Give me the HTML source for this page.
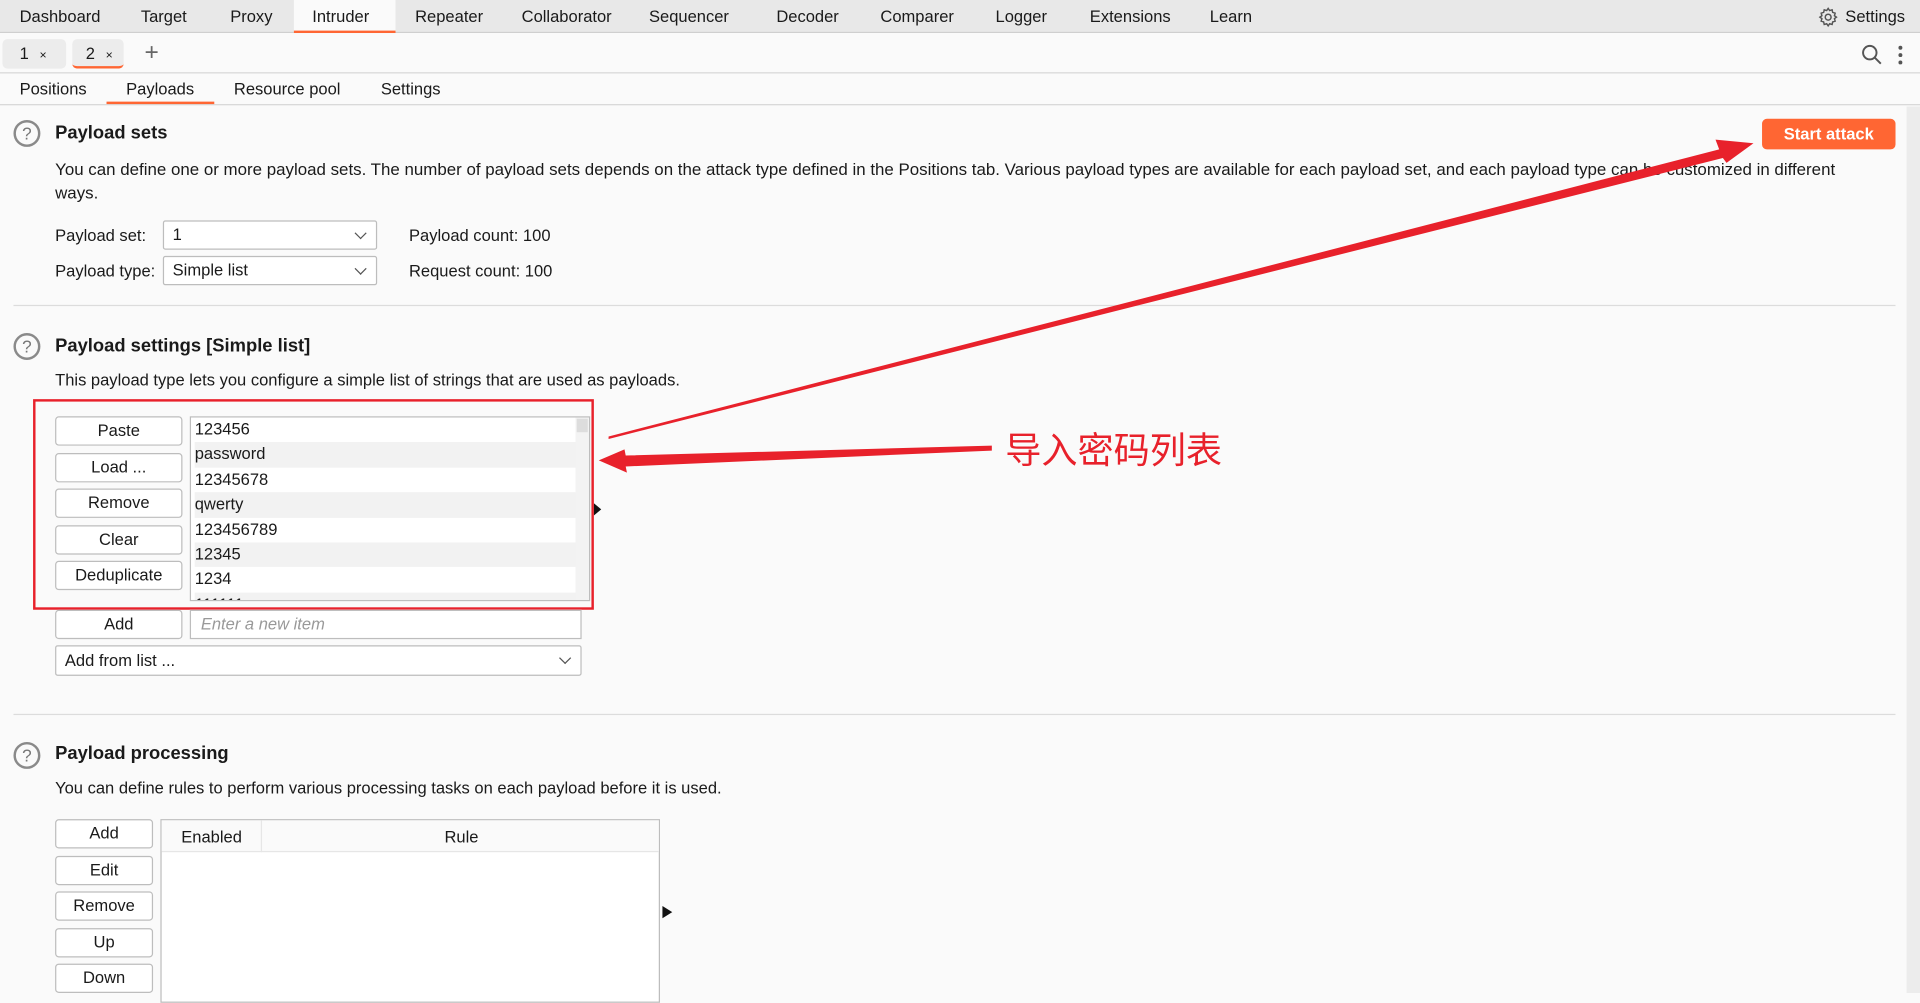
<!DOCTYPE html>
<html><head><meta charset="utf-8"><style>
*{box-sizing:border-box;margin:0;padding:0}
body{width:1920px;height:993px;overflow:hidden;background:#fafafa;font-family:"Liberation Sans","Noto Sans CJK SC",sans-serif;}
#w{position:absolute;left:0;top:0;width:1568px;height:811px;transform:scale(1.22449,1.2244);transform-origin:0 0;font-size:13.5px;color:#1a1a1a;background:#fafafa}
.a{position:absolute;white-space:nowrap}
.btn{position:absolute;background:#fff;border:1px solid #bdbdbd;border-radius:3px;text-align:center;font-size:13.5px}
.sel{position:absolute;background:#fff;border:1px solid #bdbdbd;border-radius:2px;padding-left:7px}
.sel:after{content:"";position:absolute;right:9px;top:6px;width:6px;height:6px;border-right:1.2px solid #555;border-bottom:1.2px solid #555;transform:rotate(45deg)}
.q{position:absolute;width:22px;height:22px;border:2px solid #8a8a8a;border-radius:50%;color:#777;font-size:14px;text-align:center;line-height:18px}
h2{position:absolute;font-size:15px;font-weight:bold;white-space:nowrap}
.hr{position:absolute;left:11px;width:1537px;height:1px;background:#dcdcdc}
</style></head><body><div id="w">
<div class="a" style="left:0;top:0;width:1568px;height:27px;background:#e8e8e8;border-bottom:1px solid #cfcfcf"></div>
<div class="a" style="left:240px;top:0;width:83px;height:27px;background:#fafafa;border-bottom:2px solid #ff6633"></div>
<div class="a" style="left:16px;top:6px">Dashboard</div>
<div class="a" style="left:115px;top:6px">Target</div>
<div class="a" style="left:188px;top:6px">Proxy</div>
<div class="a" style="left:255px;top:6px">Intruder</div>
<div class="a" style="left:339px;top:6px">Repeater</div>
<div class="a" style="left:426px;top:6px">Collaborator</div>
<div class="a" style="left:530px;top:6px">Sequencer</div>
<div class="a" style="left:634px;top:6px">Decoder</div>
<div class="a" style="left:719px;top:6px">Comparer</div>
<div class="a" style="left:813px;top:6px">Logger</div>
<div class="a" style="left:890px;top:6px">Extensions</div>
<div class="a" style="left:988px;top:6px">Learn</div>
<svg class="a" style="left:1484px;top:5px" width="18" height="18" viewBox="0 0 24 24" fill="none" stroke="#555" stroke-width="1.6"><circle cx="12" cy="12" r="3.2"/><path d="M12 2.5l1.6 2.3 2.7-.8.6 2.8 2.7.9-.8 2.7 2.2 1.6-2.2 1.6.8 2.7-2.7.9-.6 2.8-2.7-.8L12 21.5l-1.6-2.3-2.7.8-.6-2.8-2.7-.9.8-2.7L3 12l2.2-1.6-.8-2.7 2.7-.9.6-2.8 2.7.8z"/></svg>
<div class="a" style="left:1507px;top:6px">Settings</div>
<div class="a" style="left:0;top:27px;width:1568px;height:33px;background:#fafafa;border-bottom:1px solid #d6d6d6"></div>
<div class="a" style="left:2px;top:32px;width:52px;height:24px;background:#ececec;border-radius:4px"></div>
<div class="a" style="left:16px;top:36px">1 <span style="font-size:10px;margin-left:5px">×</span></div>
<div class="a" style="left:59px;top:32px;width:42px;height:24px;background:#ececec;border-radius:4px;border-bottom:2px solid #ff6633"></div>
<div class="a" style="left:70px;top:36px">2 <span style="font-size:10px;margin-left:5px">×</span></div>
<div class="a" style="left:118px;top:32px;font-size:20px;color:#666">+</div>
<svg class="a" style="left:1520px;top:36px" width="18" height="18" viewBox="0 0 18 18" fill="none" stroke="#555" stroke-width="1.6"><circle cx="7" cy="7" r="5.5"/><path d="M11 11l5 5"/></svg>
<svg class="a" style="left:1549px;top:36px" width="6" height="18"><circle cx="3" cy="3" r="1.6" fill="#555"/><circle cx="3" cy="9" r="1.6" fill="#555"/><circle cx="3" cy="15" r="1.6" fill="#555"/></svg>
<div class="a" style="left:0;top:60px;width:1568px;height:26px;background:#fafafa;border-bottom:1px solid #d6d6d6"></div>
<div class="a" style="left:16px;top:65px">Positions</div>
<div class="a" style="left:103px;top:65px">Payloads</div>
<div class="a" style="left:87px;top:83px;width:88px;height:2px;background:#ff6633"></div>
<div class="a" style="left:191px;top:65px">Resource pool</div>
<div class="a" style="left:311px;top:65px">Settings</div>
<div class="a" style="left:1557px;top:87px;width:11px;height:724px;background:#ececec"></div>

<div class="q" style="left:11px;top:98px">?</div>
<h2 style="left:45px;top:100px">Payload sets</h2>
<div class="a" style="left:1439px;top:97px;width:109px;height:25px;background:#ff6633;border-radius:4px;color:#fff;font-weight:bold;text-align:center;line-height:25px">Start attack</div>
<div class="a" style="left:45px;top:129px;line-height:19px;font-size:13.8px">You can define one or more payload sets. The number of payload sets depends on the attack type defined in the Positions tab. Various payload types are available for each payload set, and each payload type can be customized in different<br>ways.</div>
<div class="a" style="left:45px;top:185px">Payload set:</div>
<div class="sel" style="left:133px;top:180px;width:175px;height:24px;line-height:22px">1</div>
<div class="a" style="left:334px;top:185px">Payload count: 100</div>
<div class="a" style="left:45px;top:214px">Payload type:</div>
<div class="sel" style="left:133px;top:209px;width:175px;height:24px;line-height:22px">Simple list</div>
<div class="a" style="left:334px;top:214px">Request count: 100</div>
<div class="hr" style="top:249px"></div>

<div class="q" style="left:11px;top:272px">?</div>
<h2 style="left:45px;top:274px">Payload settings [Simple list]</h2>
<div class="a" style="left:45px;top:303px">This payload type lets you configure a simple list of strings that are used as payloads.</div>
<div class="btn" style="left:45px;top:340px;width:104px;height:24px;line-height:22px">Paste</div>
<div class="btn" style="left:45px;top:370px;width:104px;height:24px;line-height:22px">Load ...</div>
<div class="btn" style="left:45px;top:399px;width:104px;height:24px;line-height:22px">Remove</div>
<div class="btn" style="left:45px;top:429px;width:104px;height:24px;line-height:22px">Clear</div>
<div class="btn" style="left:45px;top:458px;width:104px;height:24px;line-height:22px">Deduplicate</div>
<div class="a" style="left:155px;top:340px;width:327px;height:151px;background:#fff;border:1px solid #bdbdbd;overflow:hidden">
<div style="position:absolute;right:0;top:0;width:11px;height:150px;background:#f3f3f3"></div>
<div style="position:absolute;right:1px;top:1px;width:9px;height:11px;background:#ddd"></div>
<div style="line-height:20.4px;padding-left:3px;width:314px">
<div>123456</div><div style="background:#f2f2f2">password</div><div>12345678</div><div style="background:#f2f2f2">qwerty</div><div>123456789</div><div style="background:#f2f2f2">12345</div><div>1234</div><div style="background:#f2f2f2">111111</div></div></div>
<div class="a" style="left:485px;top:411px;width:0;height:0;border-left:6px solid #111;border-top:5px solid transparent;border-bottom:5px solid transparent"></div>
<div class="a" style="left:27px;top:326px;width:458px;height:172px;border:2px solid #e8212b"></div>
<div class="btn" style="left:45px;top:498px;width:104px;height:24px;line-height:22px">Add</div>
<div class="a" style="left:155px;top:498px;width:320px;height:24px;background:#fff;border:1px solid #bdbdbd;padding-left:8px;line-height:22px;color:#999;font-style:italic">Enter a new item</div>
<div class="sel" style="left:45px;top:527px;width:430px;height:25px;line-height:23px">Add from list ...</div>
<div class="hr" style="top:583px"></div>

<div class="q" style="left:11px;top:606px">?</div>
<h2 style="left:45px;top:607px">Payload processing</h2>
<div class="a" style="left:45px;top:636px">You can define rules to perform various processing tasks on each payload before it is used.</div>
<div class="btn" style="left:45px;top:669px;width:80px;height:24px;line-height:22px">Add</div>
<div class="btn" style="left:45px;top:699px;width:80px;height:24px;line-height:22px">Edit</div>
<div class="btn" style="left:45px;top:728px;width:80px;height:24px;line-height:22px">Remove</div>
<div class="btn" style="left:45px;top:758px;width:80px;height:24px;line-height:22px">Up</div>
<div class="btn" style="left:45px;top:787px;width:80px;height:24px;line-height:22px">Down</div>
<div class="a" style="left:131px;top:669px;width:408px;height:150px;background:#fff;border:1px solid #bdbdbd">
<div style="position:absolute;left:0;top:0;width:406px;height:26px;border-bottom:1px solid #e6e6e6;background:#fafafa"></div>
<div style="position:absolute;left:81px;top:0;width:1px;height:26px;background:#e6e6e6"></div>
<div style="position:absolute;left:16px;top:6px">Enabled</div>
<div style="position:absolute;left:231px;top:6px">Rule</div></div>
<div class="a" style="left:541px;top:740px;width:0;height:0;border-left:8px solid #111;border-top:5px solid transparent;border-bottom:5px solid transparent"></div>

<svg class="a" style="left:0;top:0" width="1568" height="811">
<polygon points="497,356.5 1404,122 1401,114 1432,117 1410,133 1407,129 497,358.5" fill="#e8212b"/>
<polygon points="810,364 810,368 511,381 512,386 489,376 510,367 511,372" fill="#e8212b"/>
</svg>
<div class="a" style="left:821px;top:345px;font-size:29.5px;color:#e8212b;font-family:'Noto Sans CJK SC',sans-serif">导入密码列表</div>
</div></body></html>
